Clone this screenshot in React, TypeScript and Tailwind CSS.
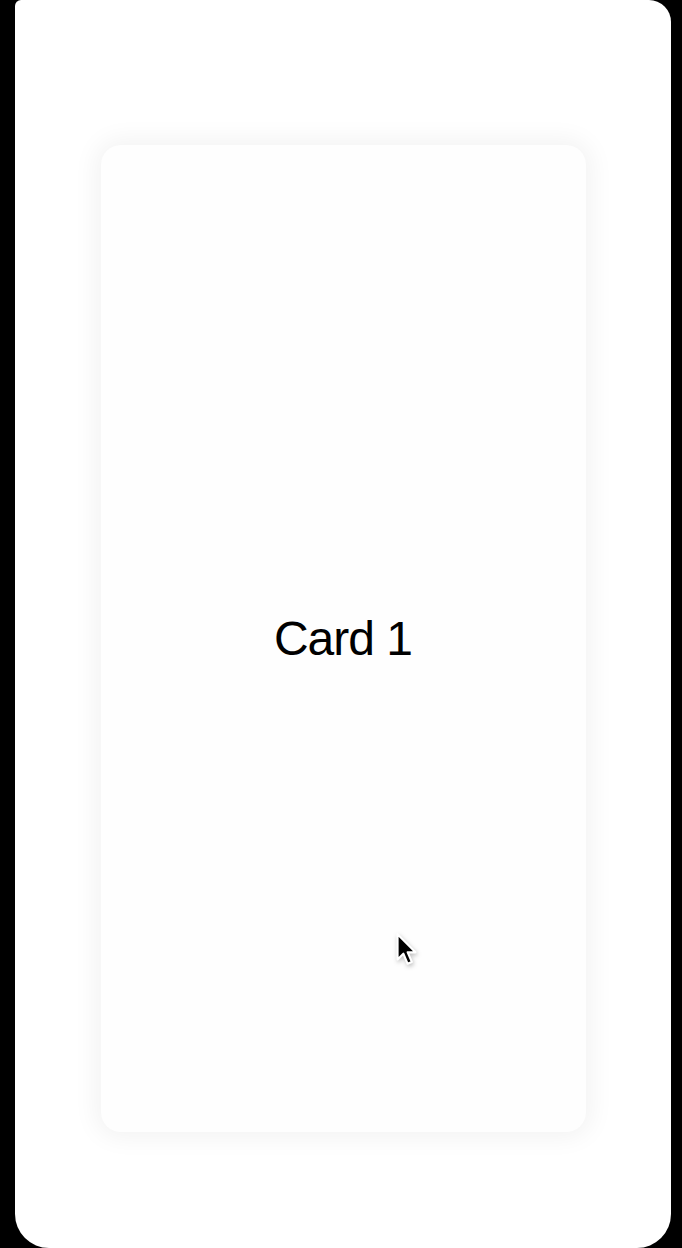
import React from 'react';

// Pointer arrow drawn over the card
const Cursor: React.FC = () => (
  <svg
    width="26"
    height="38"
    viewBox="0 0 24 36"
    className="absolute left-[378px] top-[931px] drop-shadow-[1px_2px_2px_rgba(0,0,0,0.25)]"
  >
    <path
      d="M4 3 L4 27 L9.5 21.5 L13.5 31 L17.5 29.3 L13.6 20.2 L21 20.2 Z"
      fill="#000"
      stroke="#fff"
      strokeWidth="2"
      strokeLinejoin="round"
    />
  </svg>
);

export default function App() {
  return (
    <div className="w-[682px] h-[1248px] bg-black pl-[15px] pr-[11px] overflow-hidden">
      <div className="relative h-full bg-white rounded-tr-[22px] rounded-tl-[6px] rounded-b-[34px] flex items-start justify-center pt-[145px]">
        <div className="w-[485px] h-[987px] bg-[#fefefe] rounded-[20px] shadow-[0_0_24px_6px_rgba(0,0,0,0.05)] flex items-center justify-center">
          <span
            className="text-[48px] text-black tracking-[-1px] leading-none"
            style={{ fontFamily: '"Liberation Sans", Arial, sans-serif' }}
          >
            Card 1
          </span>
        </div>
        <Cursor />
      </div>
    </div>
  );
}
